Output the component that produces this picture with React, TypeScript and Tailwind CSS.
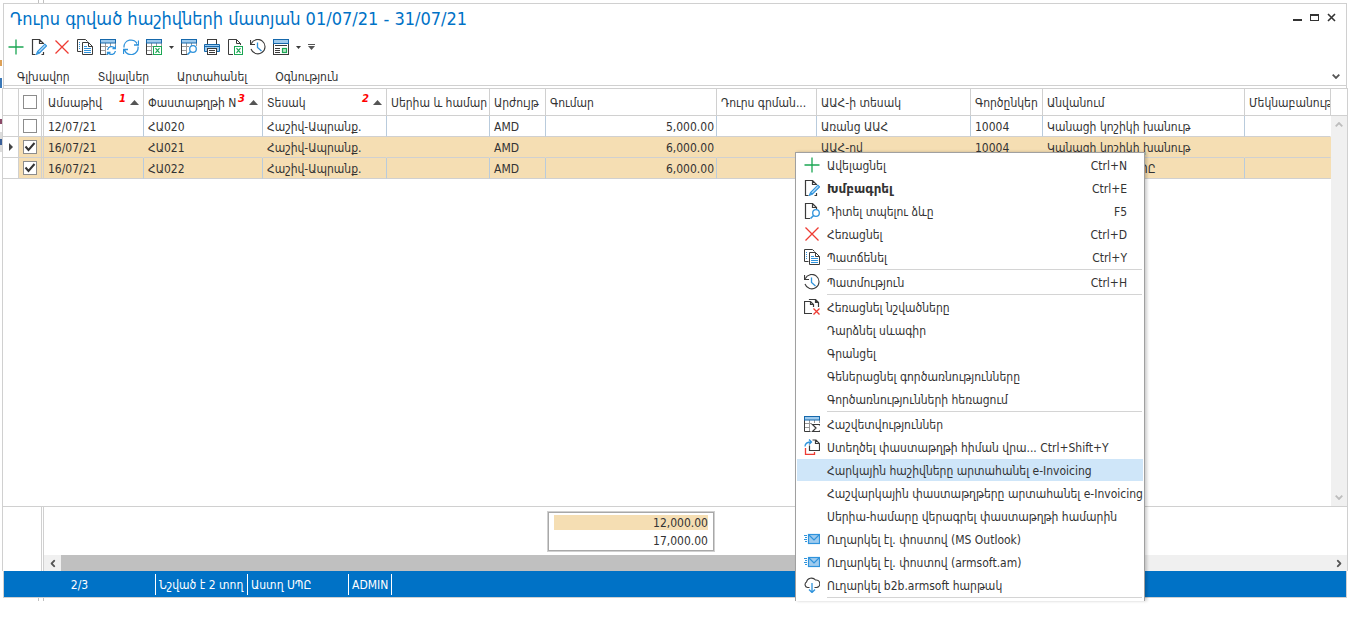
import React, { useState } from 'react';

type IconName =
  | 'plus' | 'edit' | 'remove' | 'copy' | 'tableRefresh' | 'refresh' | 'tableExcel' | 'tableSearch'
  | 'print' | 'docExcel' | 'history' | 'form' | 'docSearch' | 'copyRemove' | 'tableSum' | 'createFrom'
  | 'mail' | 'cloud';

const DARK = '#3b3b3b';
const BLUE = '#2f93dc';
const LIGHT = '#9fcbee';
const GREEN = '#1ba653';
const RED = '#ee3b33';

// Shared drawing of the small table used by several icons
const TableBase = () => (
  <>
    <path d="M5.5 4v11M10.500 4v3M1 7.500h7M1 11.500h5M15.500 4v3" stroke="#9a9a9a" />
    <path d="M0.500 4v11.500h6" stroke={DARK} />
    <rect x="0.500" y="0.500" width="15" height="3.500" fill={LIGHT} stroke="#1668ab" />
  </>
);

const PageBase = () => <path d="M6 15.5H1.500V0.500H9.500L13.500 4.500V6M9.500 0.500V4.500H13.500" stroke={DARK} />;

const ExcelMark = () => (
  <>
    <rect x="7.500" y="7.500" width="8" height="8" fill="#fff" stroke={GREEN} />
    <path d="M9.500 9.200l4 4.600M13.500 9.200l-4 4.600" stroke={GREEN} strokeWidth="1.200" />
  </>
);

const shapes: Record<IconName, React.ReactNode> = {
  plus: <path d="M8 0.500v15M0.500 8h15" stroke={GREEN} strokeWidth="1.300" />,
  edit: (
    <>
      <path d="M4.500 15.500H1.500V0.500H8.500L12.500 4.500V5M8.500 0.500V4.500H12.500M10.500 15.500H12.500V13" stroke={DARK} strokeWidth="1.200" />
      <path d="M13.800 5.200l1.700 1.700-7.300 7.300-2.800 1.100 1.100-2.800zM6.500 12.500l1.700 1.700" fill="#b8dbf5" stroke={BLUE} strokeWidth="1.100" />
    </>
  ),
  remove: <path d="M1.500 1.500l13 13M14.500 1.500l-13 13" stroke={RED} strokeWidth="1.300" />,
  copy: (
    <>
      <path d="M4.500 12.500H0.500V0.500H8.500L10.500 2.500" stroke={DARK} />
      <path d="M2 3.500h2M2 5.500h2M2 7.500h2M2 9.500h2" stroke={BLUE} strokeDasharray="1 1" />
      <path d="M5.500 3.500H11.500L15.500 7.500V15.500H5.500ZM11.500 3.500V7.500H15.500" fill="#fff" stroke={DARK} />
      <path d="M7 7.500h3M7 9.500h7M7 11.500h7M7 13.500h7" stroke={BLUE} />
    </>
  ),
  tableRefresh: (
    <>
      <TableBase />
      <path d="M7.600 11a4 4 0 0 1 7-2M15.500 6.500v3h-3M15.400 12a4 4 0 0 1-7 2M7.500 16.500v-3h3" stroke={BLUE} strokeWidth="1.300" />
    </>
  ),
  refresh: (
    <path d="M1 8.500A7 7 0 0 1 14.500 5.500M15.500 1.500v4.500h-4.500M15 7.500A7 7 0 0 1 1.500 11M0.500 15v-4.500h4.500" stroke={BLUE} strokeWidth="1.300" />
  ),
  tableExcel: (
    <>
      <TableBase />
      <ExcelMark />
    </>
  ),
  tableSearch: (
    <>
      <TableBase />
      <circle cx="12" cy="10" r="3.300" fill="#fff" stroke={BLUE} strokeWidth="1.300" />
      <path d="M9.600 12.400L6.500 15.600" stroke={BLUE} strokeWidth="1.500" />
    </>
  ),
  print: (
    <>
      <rect x="3.500" y="0.500" width="9" height="5" fill="#fff" stroke={DARK} />
      <path d="M0.500 5.500h15v7h-15z" fill={LIGHT} stroke="#1668ab" />
      <path d="M1 7.500h14" stroke="#1668ab" />
      <rect x="3.500" y="9.500" width="9" height="6" fill="#fff" stroke={DARK} />
      <path d="M5 11.500h6M5 13.500h6" stroke={DARK} />
    </>
  ),
  docExcel: (
    <>
      <PageBase />
      <ExcelMark />
    </>
  ),
  history: (
    <>
      <path d="M1.200 4.800A7.200 7.200 0 1 1 1 10" stroke={DARK} strokeWidth="1.100" />
      <path d="M0.500 1v4.500h4.500" stroke={DARK} strokeWidth="1.200" />
      <path d="M7.500 3.500v5l4 3.500" stroke={BLUE} strokeWidth="1.300" />
    </>
  ),
  form: (
    <>
      <rect x="0.500" y="0.500" width="15" height="15" fill="#fff" stroke={DARK} />
      <rect x="0.500" y="0.500" width="15" height="4" fill={LIGHT} stroke="#1668ab" />
      <path d="M2 6.500h12M2 9.500h5M2 11.500h5M2 13.500h5" stroke={DARK} />
      <rect x="9.500" y="9.500" width="4" height="4" fill="#b9e5c8" stroke={GREEN} strokeWidth="1.200" />
    </>
  ),
  docSearch: (
    <>
      <path d="M6 15.500H1.500V0.500H8.500L12.500 4.500V6M8.500 0.500V4.500H12.500" stroke={DARK} strokeWidth="1.200" />
      <circle cx="12" cy="10" r="3.300" fill="#fff" stroke={BLUE} strokeWidth="1.300" />
      <path d="M9.600 12.400L6.500 15.600" stroke={BLUE} strokeWidth="1.500" />
    </>
  ),
  copyRemove: (
    <>
      <path d="M8 14.500H0.500V2.500H6.500L9.500 5.500V8M6.500 2.500V5.500H9.500" stroke={DARK} strokeWidth="1.200" />
      <path d="M5.500 1V0.500H11.500L14.500 3.500V8M11.500 0.500V3.500H14.500" stroke={DARK} strokeWidth="1.200" />
      <path d="M9.500 9.500l6 6M15.500 9.500l-6 6" stroke={RED} strokeWidth="1.300" />
    </>
  ),
  tableSum: (
    <>
      <TableBase />
      <path d="M15.500 9.500V8.500H8.500L12 12L8.500 15.500H15.500V14.500" fill="#fff" stroke={DARK} strokeWidth="1.200" />
    </>
  ),
  createFrom: (
    <>
      <path d="M5.500 6.500V11.500H15.500V4.500L12 1H8.500M11.500 1V4.500H15.500" stroke={DARK} strokeWidth="1.200" />
      <path d="M1.500 9V15.500H10.500V13" stroke={RED} strokeWidth="1.300" />
      <path d="M1 7.500C1 4 3 3 7.500 3M5 0.500L7.500 3L5 5.500" stroke={BLUE} strokeWidth="1.300" />
    </>
  ),
  mail: (
    <>
      <rect x="4.500" y="3.500" width="11" height="9" fill={LIGHT} stroke={BLUE} strokeWidth="1.200" />
      <path d="M5 4l5 5 5-5" stroke={BLUE} strokeWidth="1.200" />
      <path d="M0 4.500h3M1 6.500h2M0 8.500h3M1 10.500h2" stroke={BLUE} />
    </>
  ),
  cloud: (
    <>
      <path d="M5.500 10.500H3.500A3 3 0 0 1 2.500 5A5 4.500 0 0 1 11.500 3A3.500 3.500 0 0 1 12.500 10.500H10.500" stroke={DARK} strokeWidth="1.100" />
      <path d="M8 6v9.500M5 12.500l3 3 3-3" stroke={BLUE} strokeWidth="1.300" />
    </>
  ),
};

const Icon = ({ name }: { name: IconName }) => (
  <svg className="size-4 shrink-0" viewBox="0 0 16 16" fill="none" aria-hidden="true">
    {shapes[name]}
  </svg>
);

const Chevron = ({ className }: { className: string }) => (
  <svg className={`h-[5px] w-[8px] ${className}`} viewBox="0 0 8 5" fill="none" aria-hidden="true">
    <path d="M0.700 0.700L4 4l3.300-3.300" stroke="currentColor" strokeWidth="1.800" />
  </svg>
);

const Caret = () => (
  <svg className="h-[3px] w-[5px]" viewBox="0 0 5 3" aria-hidden="true">
    <path d="M0 0h5L2.500 3z" fill={DARK} />
  </svg>
);

const toolbar: (IconName | 'caret')[] = [
  'plus', 'edit', 'remove', 'copy', 'tableRefresh', 'refresh', 'tableExcel', 'caret',
  'tableSearch', 'print', 'docExcel', 'history', 'form', 'caret',
];

const tabs = ['Գլխավոր', 'Տվյալներ', 'Արտահանել', 'Օգնություն'];

const columns: { title: string; width: string; sort?: number }[] = [
  { title: 'Ամսաթիվ', width: 'w-[100px]', sort: 1 },
  { title: 'Փաստաթղթի N', width: 'w-[119px]', sort: 3 },
  { title: 'Տեսակ', width: 'w-[124px]', sort: 2 },
  { title: 'Սերիա և համար', width: 'w-[103px]' },
  { title: 'Արժույթ', width: 'w-[56px]' },
  { title: 'Գումար', width: 'w-[171px]' },
  { title: 'Դուրս գրման...', width: 'w-[100px]' },
  { title: 'ԱԱՀ-ի տեսակ', width: 'w-[154px]' },
  { title: 'Գործընկեր', width: 'w-[72px]' },
  { title: 'Անվանում', width: 'w-[202px]' },
  { title: 'Մեկնաբանութ', width: 'w-auto' },
];

const rows = [
  ['12/07/21', 'ՀԱ020', 'Հաշիվ-Ապրանք.', '', 'AMD', '5,000.00', '', 'Առանց ԱԱՀ', '10004', 'Կանացի կոշիկի խանութ', ''],
  ['16/07/21', 'ՀԱ021', 'Հաշիվ-Ապրանք.', '', 'AMD', '6,000.00', '', 'ԱԱՀ-ով', '10004', 'Կանացի կոշիկի խանութ', ''],
  ['16/07/21', 'ՀԱ022', 'Հաշիվ-Ապրանք.', '', 'AMD', '6,000.00', '', 'ԱԱՀ-ով', '10005', 'Մանուշակներ ՍՊԸ', ''],
];

type MenuEntry = { label: string; icon?: IconName; keys?: string; bold?: boolean; active?: boolean } | null;

// null is a separator line
const menu: MenuEntry[] = [
  { label: 'Ավելացնել', icon: 'plus', keys: 'Ctrl+N' },
  { label: 'Խմբագրել', icon: 'edit', keys: 'Ctrl+E', bold: true },
  { label: 'Դիտել տպելու ձևը', icon: 'docSearch', keys: 'F5' },
  { label: 'Հեռացնել', icon: 'remove', keys: 'Ctrl+D' },
  { label: 'Պատճենել', icon: 'copy', keys: 'Ctrl+Y' },
  null,
  { label: 'Պատմություն', icon: 'history', keys: 'Ctrl+H' },
  null,
  { label: 'Հեռացնել նշվածները', icon: 'copyRemove' },
  { label: 'Դարձնել սևագիր' },
  { label: 'Գրանցել' },
  { label: 'Գեներացնել գործառնությունները' },
  { label: 'Գործառնությունների հեռացում' },
  null,
  { label: 'Հաշվետվություններ', icon: 'tableSum' },
  { label: 'Ստեղծել փաստաթղթի հիման վրա... Ctrl+Shift+Y', icon: 'createFrom' },
  { label: 'Հարկային հաշիվները արտահանել e-Invoicing', active: true },
  { label: 'Հաշվարկային փաստաթղթերը արտահանել e-Invoicing' },
  { label: 'Սերիա-համարը վերագրել փաստաթղթի համարին' },
  { label: 'Ուղարկել էլ. փոստով (MS Outlook)', icon: 'mail' },
  { label: 'Ուղարկել էլ. փոստով (armsoft.am)', icon: 'mail' },
  { label: 'Ուղարկել b2b.armsoft հարթակ', icon: 'cloud' },
  null,
];

const CheckBox = ({ label, checked, onChange }: { label: string; checked: boolean; onChange: () => void }) => (
  <label className="relative ml-1 block size-[14px]">
    <input
      type="checkbox"
      aria-label={label}
      checked={checked}
      onChange={onChange}
      className="peer block size-[14px] appearance-none border border-[#8c8c8c] bg-white"
    />
    <svg className="pointer-events-none invisible absolute inset-0 size-[14px] peer-checked:visible" viewBox="0 0 14 14" fill="none">
      <path d="M2.500 6.500l3 3.500 6-7" stroke="#333" strokeWidth="2" />
    </svg>
  </label>
);

const ContextMenu = () => (
  <ul className="absolute top-[152px] left-[795px] h-[449px] w-[350px] overflow-hidden border border-b-0 border-[#a0a0a0] bg-white p-px shadow-[2px_0_3px_rgba(0,0,0,0.2)]">
    {menu.map((entry, i) =>
      entry ? (
        <li key={i} className="mb-px">
          <button
            className={`flex h-[22px] w-full items-center pr-4 pl-[7px] text-left whitespace-nowrap ${entry.active ? 'bg-[#cfe6f9]' : ''}`}
          >
            <span className="mr-[7px] size-4 shrink-0">{entry.icon && <Icon name={entry.icon} />}</span>
            <span className={`pt-[2px] ${entry.bold ? "font-['DejaVu_Sans',sans-serif] font-bold" : ''}`}>{entry.label}</span>
            {entry.keys && <span className="ml-auto pt-[2px]">{entry.keys}</span>}
          </button>
        </li>
      ) : (
        <li key={i} className="mr-px mb-px ml-[30px] h-px bg-[#d4d4d4]" />
      )
    )}
  </ul>
);

const App: React.FC = () => {
  const [selected, setSelected] = useState([false, true, true]);

  const toggle = (index: number) => setSelected(selected.map((s, i) => (i === index ? !s : s)));
  const toggleAll = () => {
    const all = selected.every(Boolean);
    setSelected(selected.map(() => !all));
  };

  return (
    <div className="relative flex min-h-screen overflow-hidden bg-white pr-[2px] font-['DejaVu_Sans_Condensed','DejaVu_Sans',sans-serif] text-[12px] leading-4 text-[#333]">
      {/* edge of the window behind */}
      <div className="flex w-[2px] shrink-0 flex-col pt-[60px]">
        <div className="h-[6px] bg-[#dda056]" />
        <div className="mt-3 h-[10px] bg-[#3a78b8]" />
        <div className="mt-[31px] h-[5px] bg-[#8a4a68]" />
        <div className="mt-2 h-5 bg-[#dcdcdc] py-[7px]">
          <div className="h-[6px] bg-[#3a5f98]" />
        </div>
      </div>

      <div className="flex min-w-0 flex-1 flex-col pb-[26px]">
        <div className="ml-[36px] h-[3px] w-[6px] border-x border-[#c0c0c0]" />

        <header className="mx-px border border-b-0 border-[#d0d0d0]">
          <div className="flex h-[30px] items-center pr-[10px] pl-[6px]">
            <h1 className="flex-1 text-[18px] leading-6 text-[#0072c6]">Դուրս գրված հաշիվների մատյան 01/07/21 - 31/07/21</h1>
            <div className="flex items-center gap-2 pb-1">
              <button aria-label="Փոքրացնել">
                <svg className="size-[9px]" viewBox="0 0 9 9"><path d="M0 6h9v2H0z" fill="#333" /></svg>
              </button>
              <button aria-label="Մեծացնել">
                <svg className="size-[9px]" viewBox="0 0 9 9"><path d="M0 1h9v7H0zM1 3v4h7V3z" fill="#333" fillRule="evenodd" /></svg>
              </button>
              <button aria-label="Փակել">
                <svg className="size-[9px]" viewBox="0 0 9 9" fill="none"><path d="M1 1l7 7M8 1L1 8" stroke="#333" strokeWidth="1.600" /></svg>
              </button>
            </div>
          </div>
          <div className="flex h-[26px] items-center gap-[7px] pl-1">
            {toolbar.map((name, i) =>
              name === 'caret' ? (
                <button key={i} aria-label="Ընտրանքներ"><Caret /></button>
              ) : (
                <button key={i} aria-label={name}><Icon name={name} /></button>
              )
            )}
            <button aria-label="Ավելին">
              <svg className="h-[6px] w-[7px]" viewBox="0 0 7 6"><path d="M0 0h7v1H0zM0 2h7L3.500 6z" fill="#555" /></svg>
            </button>
          </div>
          <nav className="flex h-[26px] items-center gap-[28px] border-b border-[#d0d0d0] pt-2 pr-[6px] pl-[13px]">
            {tabs.map((tab) => (
              <button key={tab}>{tab}</button>
            ))}
            <button className="ml-auto" aria-label="Ծալել"><Chevron className="text-[#555]" /></button>
          </nav>
          <div className="h-[2px]" />
        </header>

        <main className="flex flex-1 flex-col border border-b-0 border-[#d0d0d0]">
          <div className="flex flex-1">
            <div className="min-w-0 flex-1">
              <table className="w-full table-fixed border-separate border-spacing-0">
                <thead>
                  <tr className="h-[27px] text-left">
                    <th className="w-[16px] border-r border-b border-[#d0d0d0] p-0" />
                    <th className="w-[25px] border-r border-b border-[#d0d0d0] p-0">
                      <div className="flex h-[26px] w-[23px] items-center border-r border-[#d0d0d0]">
                        <CheckBox label="Նշել բոլորը" checked={selected.every(Boolean)} onChange={toggleAll} />
                      </div>
                    </th>
                    {columns.map((col) => (
                      <th key={col.title} className={`${col.width} border-r border-b border-[#d0d0d0] p-0 font-normal`}>
                        <div className="flex h-[26px] items-center overflow-hidden pr-1 pl-1 whitespace-nowrap">
                          <span className="pt-[2px]">{col.title}</span>
                          {col.sort && (
                            <>
                              <span className="ml-auto self-start font-['DejaVu_Sans',sans-serif] text-[10px] leading-5 font-bold text-[#ff0000] italic">
                                {col.sort}
                              </span>
                              <svg className="ml-1 h-[5px] w-[9px] shrink-0" viewBox="0 0 9 5"><path d="M0 5L4.500 0L9 5z" fill="#555" /></svg>
                            </>
                          )}
                        </div>
                      </th>
                    ))}
                  </tr>
                </thead>
                <tbody>
                  {rows.map((row, r) => {
                    // the focused row is drawn without inner column lines
                    const focused = r === 1;
                    const fill = selected[r] ? 'bg-[#f5deb3]' : '';
                    return (
                      <tr key={r} className="h-[21px]">
                        <td className="border-r border-b border-[#d0d0d0] p-0">
                          {focused && (
                            <svg className="ml-[6px] h-[8px] w-[4px]" viewBox="0 0 4 8"><path d="M0 0l4 4-4 4z" fill="#444" /></svg>
                          )}
                        </td>
                        <td className={`border-r border-b border-[#d0d0d0] p-0 ${fill}`}>
                          <div className="flex h-5 w-[23px] items-center border-r border-[#d0d0d0]">
                            <CheckBox label={`Նշել ${row[1]}`} checked={selected[r]} onChange={() => toggle(r)} />
                          </div>
                        </td>
                        {row.map((value, c) => (
                          <td
                            key={c}
                            className={`overflow-hidden border-r border-b border-b-[#d0d0d0] pt-px pr-[2px] pb-0 pl-1 whitespace-nowrap ${c === 5 ? 'text-right' : ''} ${focused || c === 10 ? 'border-r-transparent' : 'border-r-[#b9cbdc]'} ${fill}`}
                          >
                            {value}
                          </td>
                        ))}
                      </tr>
                    );
                  })}
                </tbody>
              </table>
            </div>
            <div className="flex w-4 shrink-0 flex-col">
              <div className="h-[27px] border-b border-[#d0d0d0]" />
              <div className="flex flex-1 flex-col items-center justify-between bg-[#f0f0f0] py-[6px] text-[#bdbdbd]">
                <Chevron className="rotate-180" />
                <Chevron className="" />
              </div>
            </div>
          </div>

          <footer className="flex h-[65px] border-t border-[#d0d0d0]">
            <div className="w-[41px] shrink-0 border-r border-[#d0d0d0] pr-px">
              <div className="h-full border-r border-[#d0d0d0]" />
            </div>
            <div className="flex min-w-0 flex-1 flex-col justify-between">
              <div className="mt-1 ml-[503px] w-[168px] border border-[#d0d0d0]">
                <div className="border border-[#a8a8a8] px-[5px] pt-[2px] pb-px text-right">
                  <div className="h-[15px] bg-[#f5deb3]">12,000.00</div>
                  <div className="mt-[3px] h-4">17,000.00</div>
                </div>
              </div>
              <div className="flex h-4 shrink-0 bg-[#f0f0f0] text-[#555]">
                <button className="flex w-[17px] items-center justify-center" aria-label="Ձախ"><Chevron className="rotate-90" /></button>
                <div className="w-4/5 bg-[#c0c0c0]" />
                <button className="ml-auto flex w-4 items-center justify-center" aria-label="Աջ"><Chevron className="-rotate-90" /></button>
              </div>
            </div>
          </footer>
        </main>

        <div className="mx-px flex h-[27px] items-center border border-t-0 border-[#d0d0d0] bg-[#0072c6] text-white">
          <span className="w-[151px] pt-px text-center">2/3</span>
          <span className="w-[92px] border-l border-white pt-px pl-[3px] leading-5 whitespace-nowrap">Նշված է 2 տող</span>
          <span className="w-[101px] border-l border-white pt-px pl-[3px] leading-5">Աստղ ՍՊԸ</span>
          <span className="border-x border-white px-[3px] pt-px leading-5">ADMIN</span>
        </div>
        <div className="ml-[36px] h-[3px] w-[6px] border-x border-[#c0c0c0]" />
      </div>

      <ContextMenu />
    </div>
  );
};

export default App;
